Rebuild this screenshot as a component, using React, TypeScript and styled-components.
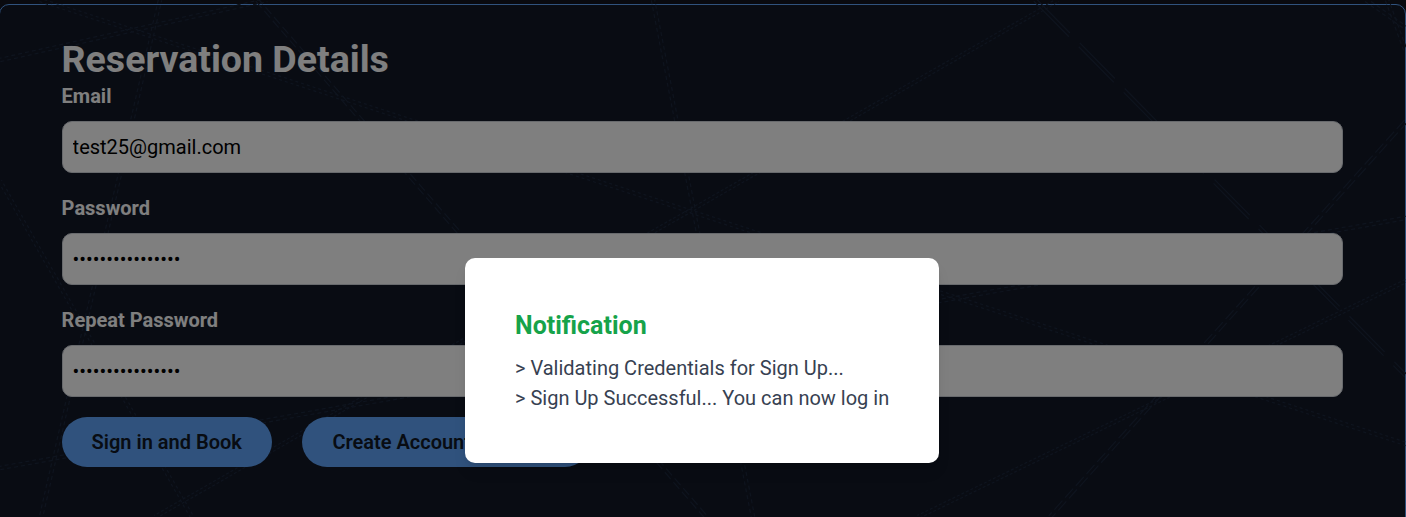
import React from "react";
import styled, { createGlobalStyle } from "styled-components";

const GlobalStyle = createGlobalStyle`
  *, *::before, *::after { box-sizing: border-box; }
  body {
    margin: 0;
    overflow: hidden;
    background: #12141f;
    font-family: Roboto, "Liberation Sans", sans-serif;
    font-size: 20px;
    line-height: 30px;
  }
  h1, h2, p { margin: 0; }
`;

const Page = styled.div`
  position: relative;
  height: 517px;
  padding-top: 4px;
  overflow: hidden;
`;

const Panel = styled.main`
  height: 560px;
  margin-left: -1px;
  padding: 32px 62px 0 61.6px;
  border: 1px solid #60a5fa;
  border-radius: 10px;
  background: #121827;
`;

const Threads = styled.svg`
  position: absolute;
  top: 0;
  left: 0;
  width: 1406px;
  height: 517px;
`;

const Content = styled.form`
  position: relative;
  display: flex;
  flex-direction: column;
`;

const Title = styled.h1`
  color: #fff;
  font-size: 37.5px;
  line-height: 45px;
  height: 44px;
  font-weight: 700;
`;

const Field = styled.div`
  display: flex;
  flex-direction: column;
  gap: 10px;
  margin-bottom: 20px;
`;

const Label = styled.label`
  color: #fff;
  font-weight: 700;
`;

const Input = styled.input`
  width: 100%;
  height: 52px;
  padding: 10px;
  border: 1px solid #d1d5db;
  border-radius: 10px;
  outline: none;
  background: #fff;
  color: #000;
  font: inherit;
`;

const Actions = styled.div`
  display: flex;
  gap: 30.5px;
`;

const Button = styled.button`
  height: 50px;
  padding: 10px 30px;
  border: 0;
  border-radius: 25px;
  background: #60a5fa;
  color: #111827;
  font: inherit;
  font-weight: 600;
  white-space: nowrap;
`;

const Overlay = styled.div`
  position: absolute;
  inset: 0;
  background: rgba(0, 0, 0, 0.5);
`;

const Dialog = styled.section`
  position: absolute;
  top: 258px;
  left: 465px;
  width: 474px;
  height: 205px;
  padding: 50px;
  border-radius: 10px;
  background: #fff;
  box-shadow: 0 10px 15px -3px rgba(0, 0, 0, 0.1), 0 4px 6px -4px rgba(0, 0, 0, 0.1);
`;

const DialogTitle = styled.h2`
  margin-bottom: 10px;
  color: #16a34a;
  font-size: 25px;
  line-height: 35px;
  font-weight: 700;
`;

const Message = styled.p`
  color: #374151;
  white-space: nowrap;
`;

type Thread = [number, number, number, number, string];

const threads: Thread[] = [
  [40, 0, 1406, 444, "3 3"],
  [0, 60, 267, 0, "4 3"],
  [160, 0, 41, 517, "4 3"],
  [257, 0, 706, 517, "9 4"],
  [0, 181, 192, 517, "3 3"],
  [0, 468, 1406, 218, "4 3"],
  [155, 517, 1058, 0, "3 2"],
  [653, 0, 753, 517, "4 3"],
  [1035, 0, 1406, 376, "50 14"],
  [1366, 0, 1406, 28, "4 3"],
  [1387, 0, 1406, 52, "4 3"],
  [1406, 121, 1050, 517, "12 4"],
  [1406, 281, 918, 517, "3 2"],
];

function Backdrop() {
  return (
    <Threads viewBox="0 0 1406 517" fill="none" stroke="#1d283c" strokeWidth="1.2" aria-hidden="true">
      {threads.map(([x1, y1, x2, y2, dash], i) => {
        const length = Math.hypot(x2 - x1, y2 - y1);
        const dx = (-(y2 - y1) / length) * 1.7;
        const dy = ((x2 - x1) / length) * 1.7;
        return (
          <g key={i} strokeDasharray={dash}>
            <line x1={x1 + dx} y1={y1 + dy} x2={x2 + dx} y2={y2 + dy} />
            <line x1={x1 - dx} y1={y1 - dy} x2={x2 - dx} y2={y2 - dy} strokeDashoffset="2" />
          </g>
        );
      })}
    </Threads>
  );
}

export default function App() {
  return (
    <>
      <GlobalStyle />
      <Page>
        <Panel>
          <Backdrop />
          <Content>
            <Title>Reservation Details</Title>
            <Field>
              <Label htmlFor="email">Email</Label>
              <Input id="email" type="email" defaultValue="test25@gmail.com" />
            </Field>
            <Field>
              <Label htmlFor="password">Password</Label>
              <Input id="password" type="password" defaultValue="reservation-2025" />
            </Field>
            <Field>
              <Label htmlFor="repeat">Repeat Password</Label>
              <Input id="repeat" type="password" defaultValue="reservation-2025" />
            </Field>
            <Actions>
              <Button type="button">Sign in and Book</Button>
              <Button type="button">Create Account and Book</Button>
            </Actions>
          </Content>
        </Panel>
        <Overlay />
        <Dialog role="dialog">
          <DialogTitle>Notification</DialogTitle>
          <Message>&gt; Validating Credentials for Sign Up...</Message>
          <Message>&gt; Sign Up Successful... You can now log in</Message>
        </Dialog>
      </Page>
    </>
  );
}
